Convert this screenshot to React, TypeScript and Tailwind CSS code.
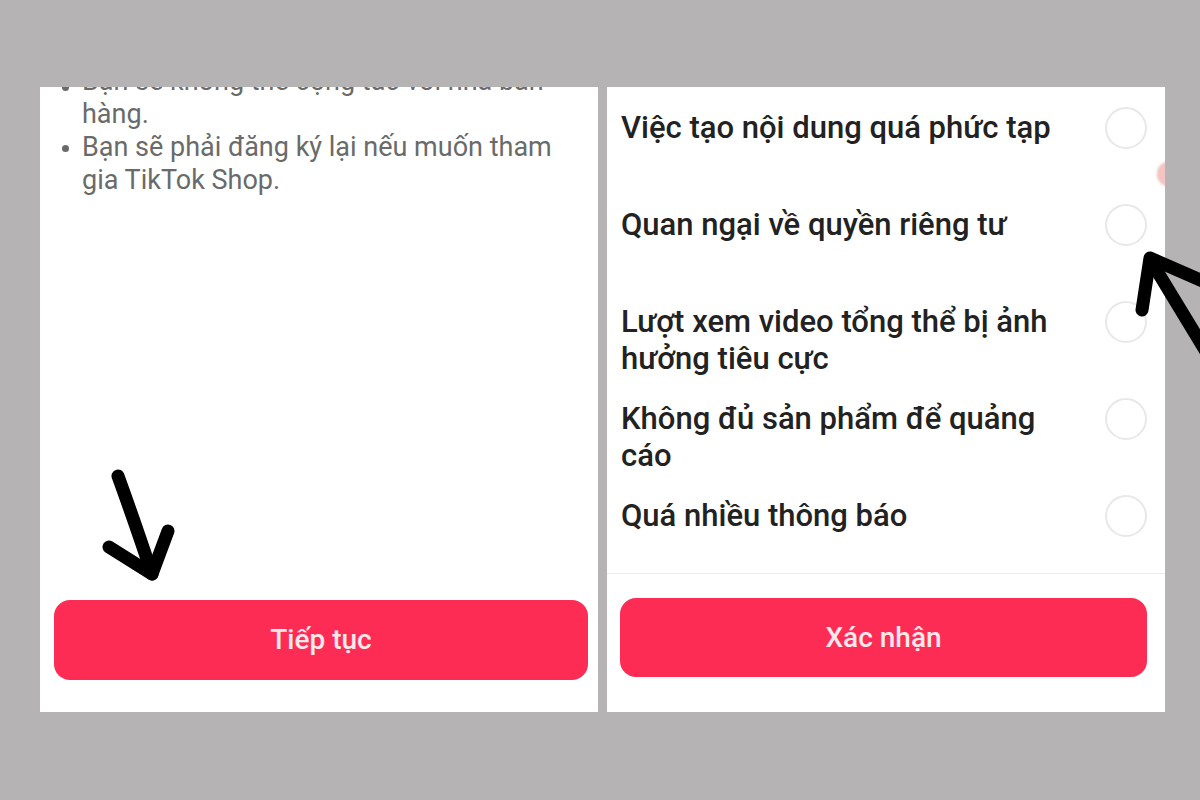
import React from "react";

const reasons: string[][] = [
  ["Việc tạo nội dung quá phức tạp"],
  ["Quan ngại về quyền riêng tư"],
  ["Lượt xem video tổng thể bị ảnh", "hưởng tiêu cực"],
  ["Không đủ sản phẩm để quảng", "cáo"],
  ["Quá nhiều thông báo"],
];

function Bullet({ first }: { first?: boolean }) {
  return (
    <span className={first ? "w-[20px] shrink-0 pt-[19px]" : "w-[20px] shrink-0 pt-[14px]"}>
      <span className="block w-[7px] h-[7px] rounded-full bg-[#6a6a6a]" />
    </span>
  );
}

export default function App() {
  return (
    <div
      className="relative w-[1200px] h-[800px] bg-[#b5b3b4] overflow-hidden"
      style={{ fontFamily: "Roboto, 'Noto Sans', 'Liberation Sans', sans-serif" }}
    >
      <div className="flex gap-[9px] pl-[40px] pt-[87px]">
        {/* Left panel */}
        <div className="w-[558px] h-[625px] bg-white overflow-hidden flex flex-col">
          <ul className="-mt-[22px] pl-[22px] pr-[20px] text-[27px] leading-[33px] text-[#6a6a6a]">
            <li className="flex">
              <Bullet first />
              <span className="whitespace-nowrap">
                Bạn sẽ không thể cộng tác với nhà bán
                <br />
                hàng.
              </span>
            </li>
            <li className="flex">
              <Bullet />
              <span className="whitespace-nowrap">
                Bạn sẽ phải đăng ký lại nếu muốn tham
                <br />
                gia TikTok Shop.
              </span>
            </li>
          </ul>
          <div className="flex-1" />
          <div className="pl-[14px] pr-[10px] pb-[32px]">
            <button className="w-full h-[80px] rounded-[16px] bg-[#fd2c55] text-[#fde8ec] text-[28px] font-medium flex items-center justify-center">
              Tiếp tục
            </button>
          </div>
        </div>

        {/* Right panel */}
        <div className="relative w-[558px] h-[625px] bg-white overflow-hidden flex flex-col">
          <div className="absolute right-[-14px] top-[75px] w-[22px] h-[24px] rounded-full bg-[#f2c4c2] blur-[1px]" />
          <div className="pt-[22px] pl-[14px] pr-[18px] flex-1 min-h-0 overflow-hidden">
            {reasons.map((lines, i) => (
              <div key={i} className="flex items-start justify-between h-[97px]">
                <div className="text-[31px] leading-[37px] font-medium text-[#222222] whitespace-nowrap">
                  {lines.map((l, j) => (
                    <div key={j}>{l}</div>
                  ))}
                </div>
                <div className="w-[42px] h-[42px] rounded-full border-2 border-[#e8e8e8] shrink-0 -mt-[2px]" />
              </div>
            ))}
          </div>
          <div className="h-[1px] bg-[#ececec]" />
          <div className="pl-[13px] pr-[18px] pt-[24px] pb-[35px]">
            <button className="w-full h-[79px] rounded-[16px] bg-[#fd2c55] text-[#fde8ec] text-[28px] font-medium flex items-center justify-center">
              Xác nhận
            </button>
          </div>
        </div>
      </div>

      {/* Hand-drawn annotation arrows */}
      <svg
        className="absolute left-0 top-0 pointer-events-none"
        width="1200"
        height="800"
        viewBox="0 0 1200 800"
      >
        <g fill="none" stroke="#000" strokeWidth="13" strokeLinecap="round" strokeLinejoin="round">
          <path d="M118 476 Q134 520 152 574" />
          <path d="M109 547 L152 574 L168 531" />
          <path d="M1142 310 L1150 258 L1205 282" />
          <path d="M1154 266 L1205 350" />
        </g>
      </svg>
    </div>
  );
}
